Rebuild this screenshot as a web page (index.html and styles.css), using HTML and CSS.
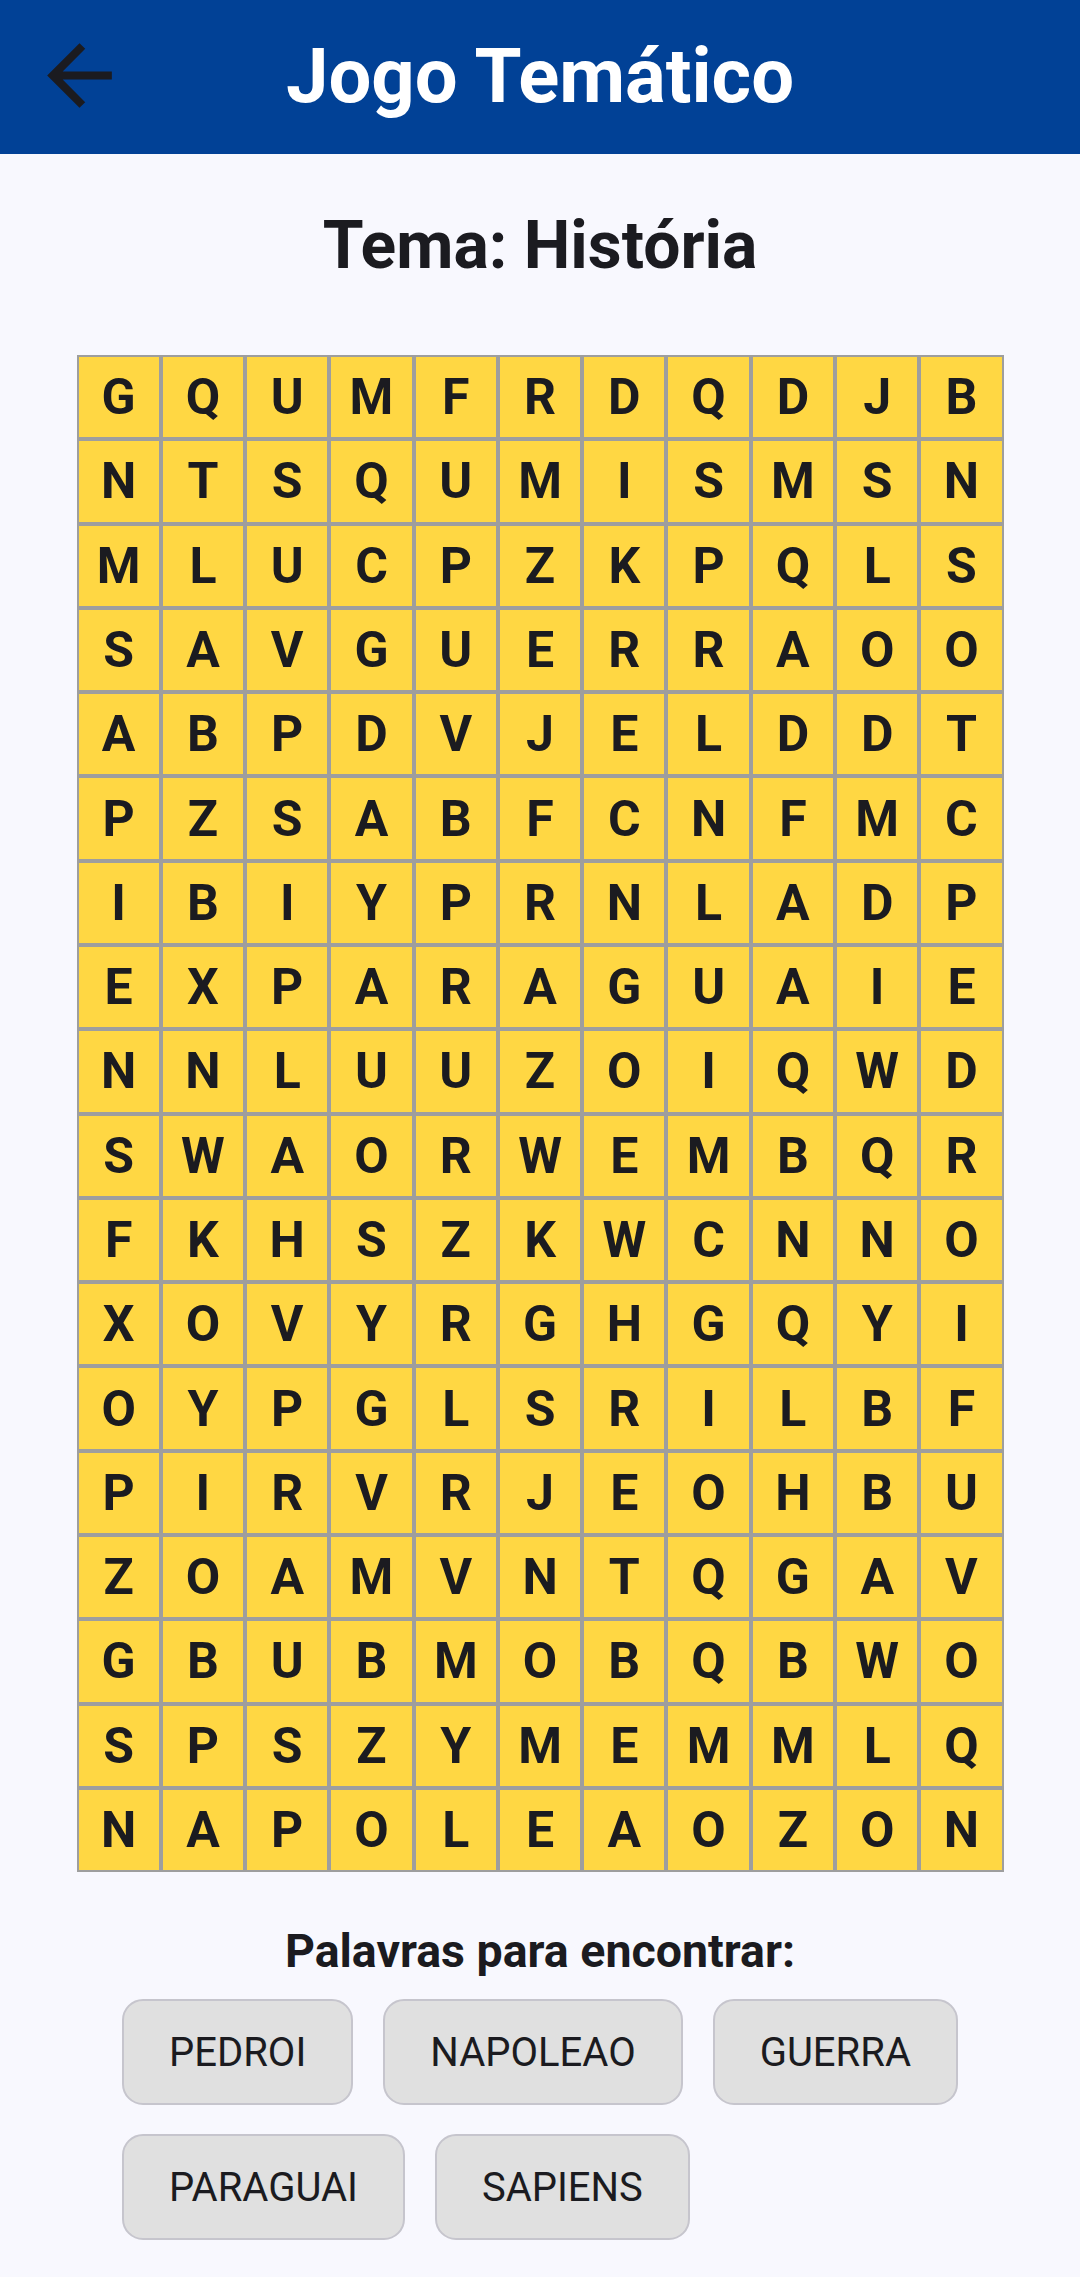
FILE: index.html
```html
<!DOCTYPE html>
<html lang="pt">
<head>
<meta charset="utf-8">
<title>Jogo Temático</title>
<link rel="stylesheet" href="styles.css">
</head>
<body>
<header class="appbar">
  <button class="back" aria-label="Voltar">
    <svg viewBox="0 0 24 24" width="97" height="97"><path d="M20 11H7.83l5.59-5.59L12 4l-8 8 8 8 1.41-1.41L7.83 13H20v-2z"/></svg>
  </button>
  <h1 class="title">Jogo Temático</h1>
</header>
<main class="content">
  <h2 class="theme">Tema: História</h2>
  <div class="grid" id="grid"></div>
  <h3 class="words-title">Palavras para encontrar:</h3>
  <div class="chips">
    <span class="chip">PEDROI</span>
    <span class="chip">NAPOLEAO</span>
    <span class="chip">GUERRA</span>
    <span class="chip">PARAGUAI</span>
    <span class="chip">SAPIENS</span>
  </div>
</main>
<script src="script.js"></script>
</body>
</html>
```
FILE: styles.css
```css
* { box-sizing: border-box; }
html, body { margin: 0; padding: 0; }
body {
  background: #f8f8fe;
  font-family: Roboto, "Liberation Sans", sans-serif;
  color: #1b1b20;
  width: 1080px;
  min-height: 2277px;
}
.appbar {
  height: 154px;
  background: #014196;
  display: flex;
  align-items: center;
  justify-content: center;
  position: relative;
}
.back {
  position: absolute;
  left: 31px;
  top: 27px;
  width: 97px;
  height: 97px;
  padding: 0;
  border: 0;
  background: none;
}
.back svg { display: block; fill: #1b1b20; }
.title {
  margin: 0 0 2px;
  color: #fff;
  font-size: 76px;
  font-weight: 700;
  line-height: normal;
}
.content {
  display: flex;
  flex-direction: column;
  align-items: center;
  padding-top: 53px;
}
.theme {
  margin: 0 0 71px;
  font-size: 66px;
  font-weight: 700;
  line-height: normal;
}
.grid {
  width: 927px;
  display: grid;
  grid-template-columns: repeat(11, 1fr);
}
.cell {
  aspect-ratio: 1 / 1;
  background: #ffd743;
  border: 2.6px solid #9e9e9e;
  display: flex;
  align-items: center;
  justify-content: center;
  font-size: 50px;
  font-weight: 700;
  line-height: normal;
  color: #1b1b20;
}
.words-title {
  margin: 52px 0 21px;
  font-size: 46.5px;
  font-weight: 700;
  line-height: normal;
}
.chips {
  width: 100%;
  padding: 0 122px;
  display: flex;
  flex-wrap: wrap;
  gap: 29px 30px;
}
.chip {
  height: 106px;
  padding: 0 45px;
  display: flex;
  align-items: center;
  background: #e0e0e0;
  border: 2.6px solid #c6c5cd;
  border-radius: 21px;
  font-size: 40px;
  font-weight: 400;
  color: #1b1b20;
}
```
FILE: script.js
```js
var rows = [
  "GQUMFRDQDJB",
  "NTSQUMISMSN",
  "MLUCPZKPQLS",
  "SAVGUERRAOO",
  "ABPDVJELDDT",
  "PZSABFCNFMC",
  "IBIYPRNLADP",
  "EXPARAGUAIE",
  "NNLUUZOIQWD",
  "SWAORWEMBQR",
  "FKHSZKWCNNO",
  "XOVYRGHGQYI",
  "OYPGLSRILBF",
  "PIRVRJEOHBU",
  "ZOAMVNTQGAV",
  "GBUBMOBQBWO",
  "SPSZYMEMMLQ",
  "NAPOLEAOZON"
];
var grid = document.getElementById("grid");
rows.forEach(function (r) {
  r.split("").forEach(function (ch) {
    var d = document.createElement("div");
    d.className = "cell";
    d.textContent = ch;
    grid.appendChild(d);
  });
});
```
